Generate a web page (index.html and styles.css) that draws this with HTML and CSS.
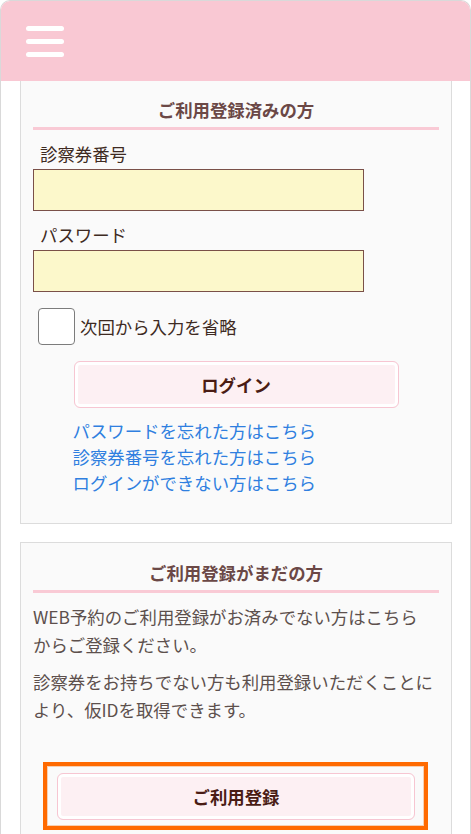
FILE: index.html
```html
<!DOCTYPE html>
<html lang="ja">
<head>
<meta charset="utf-8">
<title>ログイン</title>
<link rel="stylesheet" href="styles.css">
</head>
<body>
<div class="frame">
  <header class="header">
    <button class="menu" type="button" aria-label="メニュー">
      <span class="menu__bar"></span>
      <span class="menu__bar"></span>
      <span class="menu__bar"></span>
    </button>
  </header>
  <main class="main">
    <section class="card card--first">
      <h2 class="card__title">ご利用登録済みの方</h2>
      <label class="field-label" for="card-no">診察券番号</label>
      <input class="field" id="card-no" type="text">
      <label class="field-label" for="password">パスワード</label>
      <input class="field" id="password" type="password">
      <label class="remember">
        <input class="remember__box" type="checkbox">
        <span class="remember__text">次回から入力を省略</span>
      </label>
      <button class="btn btn--login" type="button">ログイン</button>
      <div class="links">
        <a class="links__item" href="#">パスワードを忘れた方はこちら</a>
        <a class="links__item" href="#">診察券番号を忘れた方はこちら</a>
        <a class="links__item" href="#">ログインができない方はこちら</a>
      </div>
    </section>
    <section class="card">
      <h2 class="card__title">ご利用登録がまだの方</h2>
      <p class="card__text">WEB予約のご利用登録がお済みでない方はこちら<br>からご登録ください。</p>
      <p class="card__text">診察券をお持ちでない方も利用登録いただくことにより、仮IDを取得できます。</p>
      <div class="highlight">
        <button class="btn btn--register" type="button">ご利用登録</button>
      </div>
    </section>
  </main>
</div>
</body>
</html>
```

FILE: styles.css
```css
* { box-sizing: border-box; }

html, body {
  margin: 0;
  padding: 0;
  background: #ffffff;
}

body {
  font-family: "Noto Sans CJK JP", "Noto Sans", sans-serif;
  font-size: 17.4px;
  color: #3e2a22;
}

.frame {
  width: 471px;
  min-height: 834px;
  border: 1px solid #d9d9d9;
  border-bottom: 0;
  border-radius: 10px 10px 0 0;
  overflow: hidden;
  background: #ffffff;
}

.header {
  height: 80px;
  background: #f9c8d3;
  padding: 25px 0 0 25px;
}

.menu {
  display: flex;
  flex-direction: column;
  gap: 8px;
  padding: 0;
  margin: 0;
  border: 0;
  background: transparent;
}

.menu__bar {
  display: block;
  width: 38px;
  height: 5px;
  border-radius: 3px;
  background: #ffffff;
}

.main {
  padding: 0 18px 0 19px;
}

.card {
  background: #fafafa;
  border: 1px solid #dcdcdc;
  padding: 17px 12px 27px;
  margin-bottom: 18px;
}

.card--first {
  border-top: 0;
  padding-top: 16px;
}

.card__title {
  margin: 0;
  text-align: center;
  font-size: 17.4px;
  line-height: 26px;
  font-weight: 700;
  color: #6b4846;
  padding-bottom: 4px;
  border-bottom: 3px solid #f9cad5;
}

.field-label {
  display: block;
  margin-top: 12px;
  padding-left: 7px;
  line-height: 24px;
  color: #3e2a22;
}

.field {
  display: block;
  width: 331px;
  height: 42px;
  margin: 3px 0 0;
  border: 1px solid #7a5048;
  border-radius: 0;
  background: #fcf8cb;
  font: inherit;
}

.remember {
  display: flex;
  align-items: center;
  gap: 5px;
  margin-top: 16px;
  padding-left: 5px;
}

.remember__box {
  appearance: none;
  -webkit-appearance: none;
  width: 37px;
  height: 37px;
  margin: 0;
  border: 1px solid #7c7c7c;
  border-radius: 4px;
  background: #ffffff;
}

.remember__text {
  line-height: 24px;
  color: #3e2a22;
}

.btn {
  display: block;
  height: 47px;
  border: 1px solid #f7c6d2;
  border-radius: 6px;
  box-shadow: inset 0 0 0 3px #ffffff;
  background: #fdf0f3;
  font-family: inherit;
  font-size: 17.4px;
  font-weight: 700;
  color: #4a1c14;
  padding: 0;
}

.btn--login {
  width: 325px;
  margin: 16px auto 0;
}

.links {
  width: 327px;
  margin: 10px auto 0;
}

.links__item {
  display: block;
  line-height: 26px;
  color: #2f7fe0;
  text-decoration: none;
}

.card__text {
  margin: 10px 0 0;
  line-height: 28px;
  color: #5d504d;
}

.card__text + .card__text {
  margin-top: 9px;
}

.highlight {
  margin: 38px 11px 0 10px;
  border: 4px solid #ff6a00;
  box-shadow: inset 0 0 0 1px #f7cfb2;
  padding: 7px 9px 6px 10px;
}

.btn--register {
  width: 100%;
}
```
